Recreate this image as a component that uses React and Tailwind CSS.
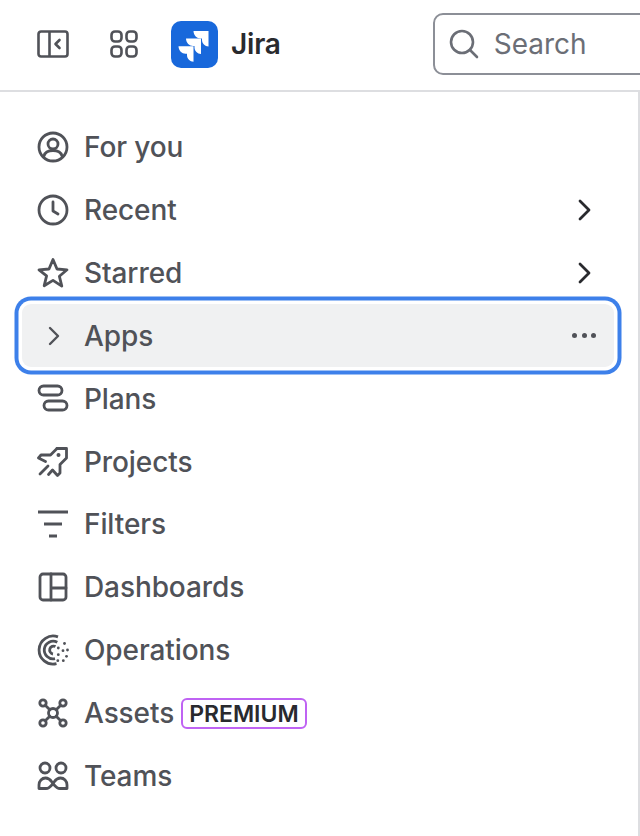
function SidebarIcon() {
  return (
    <svg className="shrink-0" width="32" height="28" viewBox="0 0 32 28" fill="none" stroke="#505258" strokeWidth="2.6" strokeLinejoin="round" strokeLinecap="round">
      <rect x="1.500" y="1.500" width="29" height="25" rx="2.500" />
      <path d="M12.500 1.500v25" strokeLinecap="butt" />
      <path d="M22.500 10l-4 4 4 4" />
    </svg>
  );
}

function GridIcon() {
  return (
    <svg className="shrink-0" width="28" height="28" viewBox="0 0 28 28" fill="none" stroke="#505258" strokeWidth="2.6">
      <rect x="1.500" y="1.500" width="10" height="10" rx="3.500" />
      <rect x="16.500" y="1.500" width="10" height="10" rx="3.500" />
      <rect x="1.500" y="16.500" width="10" height="10" rx="3.500" />
      <rect x="16.500" y="16.500" width="10" height="10" rx="3.500" />
    </svg>
  );
}

function JiraLogo() {
  return (
    <div className="flex h-[47px] w-[47px] shrink-0 items-center justify-center rounded-[10px] bg-[#1868db]">
      <svg width="47" height="47" viewBox="0 0 47 47" fill="white">
        <path d="M22.500 10h15v15.500c-3.500 0-6.500-3-6.500-6.500v-1.500h-1.500c-3.500 0-7-3-7-7.500z" />
        <path d="M15 17.500h15V33c-3.500 0-6.500-3-6.500-6.500V25H22c-3.500 0-7-3-7-7.500z" />
        <path d="M7.500 25.200h15v15.500c-3.500 0-6.500-3-6.500-6.500v-1.500h-1.500c-3.500 0-7-3-7-7.500z" />
      </svg>
    </div>
  );
}

const iconProps = {
  width: 32,
  height: 32,
  viewBox: "0 0 32 32",
  fill: "none",
  stroke: "#505258",
  strokeWidth: 2.8,
  strokeLinecap: "round",
  strokeLinejoin: "round",
};

const icons = {
  foryou: (
    <svg {...iconProps}>
      <circle cx="16" cy="16" r="14" />
      <circle cx="16" cy="13" r="5" />
      <path d="M7 25c1-4 4-5.500 9-5.500s8 1.500 9 5.500" />
    </svg>
  ),
  recent: (
    <svg {...iconProps}>
      <circle cx="16" cy="16" r="14" />
      <path d="M16 8v9l5 3" />
    </svg>
  ),
  starred: (
    <svg {...iconProps}>
      <path d="M16 2.500l4 9.500 10 .8-7.600 6.500 2.400 9.900L16 23.400 7.200 28.700l2.400-9.900L2 12.800l10-.8z" />
    </svg>
  ),
  plans: (
    <svg {...iconProps}>
      <rect x="2" y="3" width="23" height="9" rx="4.500" />
      <rect x="7" y="18" width="23" height="9" rx="4.500" />
    </svg>
  ),
  projects: (
    <svg {...iconProps}>
      <path d="M20 2.500h9.500V12L23 18.500V27l-2.500 2.500-5-5.500-4 4.500" />
      <path d="M20 2.500L13.500 9H4l-2.500 3 7 3.500" />
      <circle cx="21.500" cy="9" r="2" fill="#505258" stroke="none" />
      <path d="M3 28l8-8" />
    </svg>
  ),
  filters: (
    <svg {...iconProps} strokeLinecap="butt">
      <path d="M1 4h30M7 16h18M12 28h8" />
    </svg>
  ),
  dashboards: (
    <svg {...iconProps}>
      <rect x="3" y="3" width="26" height="26" rx="3" />
      <path d="M14 3v26M14 17h15" />
    </svg>
  ),
  operations: (
    <svg {...iconProps} strokeLinecap="butt">
      <path d="M21 2.900A14 14 0 1 0 19.500 29.600" />
      <path d="M20.300 8.300A8.800 8.800 0 1 0 18 24.600" />
      <path d="M18.500 12.500A4 4 0 1 0 16 20" />
      <g fill="#505258" stroke="none">
        <circle cx="27.500" cy="9.500" r="1.400" />
        <circle cx="30.500" cy="16" r="1.400" />
        <circle cx="29.500" cy="22.300" r="1.400" />
        <circle cx="26.300" cy="26.700" r="1.400" />
        <circle cx="21.300" cy="14" r="1.400" />
        <circle cx="26" cy="16.700" r="1.400" />
        <circle cx="21.300" cy="20.700" r="1.400" />
        <circle cx="20.800" cy="26.700" r="1.400" />
      </g>
    </svg>
  ),
  assets: (
    <svg {...iconProps}>
      <circle cx="6" cy="6" r="3.200" />
      <circle cx="26" cy="6" r="3.200" />
      <circle cx="6" cy="26" r="3.200" />
      <circle cx="26" cy="26" r="3.200" />
      <circle cx="16" cy="16" r="4.500" />
      <path d="M8.500 8.500l4.300 4.300M23.500 8.500l-4.300 4.300M8.500 23.500l4.300-4.300M23.500 23.500l-4.300-4.300" />
    </svg>
  ),
  teams: (
    <svg {...iconProps}>
      <circle cx="8" cy="8" r="5" />
      <circle cx="24" cy="8" r="5" />
      <path d="M2 28.500V25c0-4 3-7 6.500-7 4.500 0 5.500 3 7.500 5.500s3.500 5 7 5h7V25c0-4-3-7-6.500-7-4.500 0-5.500 3-7.500 5.500s-3.500 5-7 5z" />
    </svg>
  ),
};

function NavRow({ icon, label, arrow, badge }) {
  return (
    <div className="flex h-[62.8px] items-center pl-[37px] pr-[45px]">
      <span className="flex h-8 w-8 shrink-0 items-center justify-center">{icons[icon]}</span>
      <span className="ml-[15px] text-[28px] font-[550] tracking-[-0.1px] text-[#505258]">{label}</span>
      {badge && (
        <span className="ml-[7px] mt-[2px] flex h-[31px] items-center rounded-[6px] border-2 border-[#bf63f3] px-[6px] text-[23px] font-semibold text-[#292a2e]">
          {badge}
        </span>
      )}
      {arrow && (
        <svg className="ml-auto" width="16" height="22" viewBox="0 0 16 22" fill="none" stroke="#292a2e" strokeWidth="2.800" strokeLinecap="round" strokeLinejoin="round">
          <path d="M3 2l9 9-9 9" />
        </svg>
      )}
    </div>
  );
}

export default function App() {
  return (
    <div className="h-[836px] w-[640px] overflow-hidden bg-white font-['Inter',sans-serif]">
      <header className="box-content flex h-[88px] items-center border-b-2 border-[#dddee1] pb-[2px] pl-[37px]">
        <SidebarIcon />
        <span className="ml-[41px] shrink-0"><GridIcon /></span>
        <span className="ml-[33px] shrink-0"><JiraLogo /></span>
        <span className="ml-[13px] shrink-0 text-[28px] font-semibold tracking-[-0.2px] text-[#292a2e]">Jira</span>
        <div className="ml-[152px] flex h-[62px] w-[300px] shrink-0 items-center rounded-[10px] border-2 border-[#8c8f97] pl-[14px]">
          <svg className="shrink-0" width="30" height="30" viewBox="0 0 30 30" fill="none" stroke="#6b6e76" strokeWidth="2.600" strokeLinecap="round">
            <circle cx="13" cy="13" r="11" />
            <path d="M21 21l7 7" />
          </svg>
          <span className="ml-[15px] text-[28px] text-[#6b6e76]">Search</span>
        </div>
      </header>
      <nav className="relative h-[744px] border-r-2 border-[#dddee1] pt-[23.700px]">
        <NavRow icon="foryou" label="For you" />
        <NavRow icon="recent" label="Recent" arrow />
        <NavRow icon="starred" label="Starred" arrow />
        <div className="relative z-10 ml-[21.500px] mr-[24px] flex h-[63.300px] items-center rounded-[9px] bg-[#f0f1f2] pl-[23px] pr-[18px] shadow-[0_0_0_3.500px_#fff,0_0_0_7.500px_#3d80ea]">
          <svg className="shrink-0" width="20" height="24" viewBox="0 0 20 24" fill="none" stroke="#505258" strokeWidth="2.400" strokeLinecap="round" strokeLinejoin="round">
            <path d="M5 4l8 8-8 8" />
          </svg>
          <span className="ml-[19.500px] text-[28px] font-[550] tracking-[-0.1px] text-[#505258]">Apps</span>
          <span className="ml-auto flex gap-[4.500px]">
            <span className="h-[5px] w-[5px] rounded-full bg-[#505258]" />
            <span className="h-[5px] w-[5px] rounded-full bg-[#505258]" />
            <span className="h-[5px] w-[5px] rounded-full bg-[#505258]" />
          </span>
        </div>
        <NavRow icon="plans" label="Plans" />
        <NavRow icon="projects" label="Projects" />
        <NavRow icon="filters" label="Filters" />
        <NavRow icon="dashboards" label="Dashboards" />
        <NavRow icon="operations" label="Operations" />
        <NavRow icon="assets" label="Assets" badge="PREMIUM" />
        <NavRow icon="teams" label="Teams" />
      </nav>
    </div>
  );
}
